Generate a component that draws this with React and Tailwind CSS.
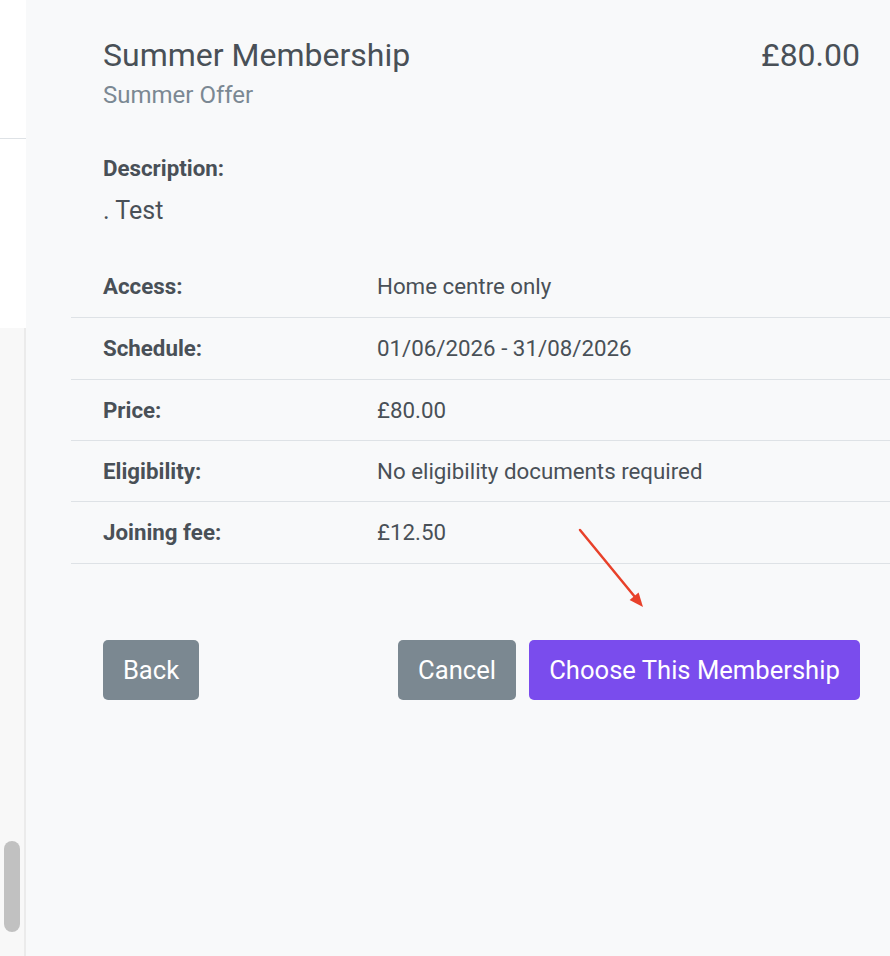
import React from "react";

const rows = [
  { label: "Access:", value: "Home centre only", h: "h-[62px]" },
  { label: "Schedule:", value: "01/06/2026 - 31/08/2026", h: "h-[62px]" },
  { label: "Price:", value: "£80.00", h: "h-[61px]" },
  { label: "Eligibility:", value: "No eligibility documents required", h: "h-[61px]" },
  { label: "Joining fee:", value: "£12.50", h: "h-[62px]" },
];

export default function App() {
  return (
    <div className="relative flex h-[956px] w-[890px] overflow-hidden font-['Roboto','Liberation_Sans',sans-serif] text-[#495057]">
      <aside className="flex w-[26px] shrink-0 flex-col">
        <div className="h-[328px] bg-white">
          <div className="h-[139px] border-b border-[#dee2e6]" />
        </div>
        <div className="relative flex-1 border-r-2 border-[#ebebeb] bg-[#f8f8f8]">
          <div className="absolute left-[4px] top-[513px] h-[91px] w-[16px] rounded-full bg-[#c1c1c1]" />
        </div>
      </aside>

      <main className="flex-1 bg-[#f8f9fa] pl-[45px]">
        <div className="flex items-start justify-between pl-[32px] pr-[30px] pt-[35px]">
          <div className="flex flex-col">
            <h1 className="text-[32px] leading-[40px]">Summer Membership</h1>
            <p className="mt-[4px] text-[24px] leading-[32px] text-[#7b8893]">Summer Offer</p>
          </div>
          <div className="text-[32px] leading-[40px]">£80.00</div>
        </div>

        <div className="mt-[41px] px-[32px]">
          <div className="text-[22.3px] font-bold leading-[33px]">Description:</div>
          <p className="mt-[8px] text-[25px] leading-[36px]">. Test</p>
        </div>

        <div className="mt-[27px]">
          {rows.map((r) => (
            <div
              key={r.label}
              className={`grid grid-cols-[306px_1fr] items-center border-b border-[#dee2e6] text-[22.3px] leading-[33px] ${r.h}`}
            >
              <div className="pl-[32px] font-bold">{r.label}</div>
              <div>{r.value}</div>
            </div>
          ))}
        </div>

        <div className="mt-[76px] flex items-center justify-between pl-[32px] pr-[30px]">
          <button className="flex h-[60px] w-[96px] items-center justify-center rounded-[5px] bg-[#7b8891] text-[25.6px] text-white">
            Back
          </button>
          <div className="flex items-center gap-[13px]">
            <button className="flex h-[60px] w-[118px] items-center justify-center rounded-[5px] bg-[#7b8891] text-[25.6px] text-white">
              Cancel
            </button>
            <button className="flex h-[60px] w-[331px] items-center justify-center rounded-[5px] bg-[#7a4ced] text-[25.6px] text-white">
              Choose This Membership
            </button>
          </div>
        </div>
      </main>

      <svg
        className="absolute left-[560px] top-[520px]"
        width="100"
        height="100"
        viewBox="0 0 100 100"
      >
        <line x1="20" y1="10" x2="75" y2="77" stroke="#e8412a" strokeWidth="2.5" strokeLinecap="round" />
        <polygon points="83,87 69.6,80 78.6,72.6" fill="#e8412a" />
      </svg>
    </div>
  );
}
